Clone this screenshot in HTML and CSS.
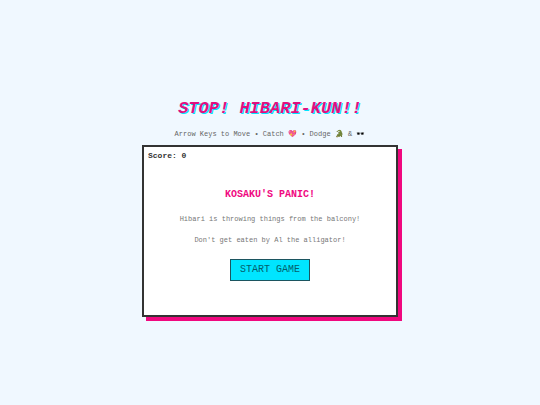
FILE: index.html
```html
<!DOCTYPE html>
<html lang="en">
<head>
<meta charset="UTF-8">
<meta name="viewport" content="width=device-width, initial-scale=1.0">
<title>Stop! Hibari-kun!!</title>
<link rel="stylesheet" href="styles.css">
</head>
<body>

<h1>STOP! HIBARI-KUN!!</h1>
<p class="controls">Arrow Keys to Move • Catch 💖 • Dodge 🐊 &amp; 🕶️</p>

<div class="game">
  <div class="score">Score: <span id="score">0</span></div>
  <div class="overlay">
    <h2>KOSAKU'S PANIC!</h2>
    <p>Hibari is throwing things from the balcony!</p>
    <p>Don't get eaten by Al the alligator!</p>
    <button type="button" class="start">START GAME</button>
  </div>
</div>

</body>
</html>
```
FILE: styles.css
```css
* { box-sizing: border-box; }
body {
  margin: 0;
  min-height: 100vh;
  display: flex; flex-direction: column;
  justify-content: center; align-items: center;
  background: #f0f8ff;
  color: #333;
  font-family: "Liberation Mono", "Courier New", monospace;
  font-size: 7px; line-height: 8px;
}
h1, h2, p { margin: 0; }
h1 {
  margin-top: 10px;
  font-size: 17px; line-height: 20px;
  font-style: italic;
  color: #e0107f;
  text-shadow: 1px 1px 0 #00e5ff;
}
.controls { margin: 11px 0 7px; color: #666; }

/* game window */
.game {
  width: 256px; max-width: 100%;
  min-height: 172px;
  display: flex; flex-direction: column;
  background: #fff;
  border: 2px solid #333;
  box-shadow: 4px 4px 0 #f0087f;
}
.score {
  padding: 4px;
  font-size: 8px; line-height: 9px; font-weight: bold;
}
.overlay {
  flex: 1;
  display: flex; flex-direction: column;
  align-items: center;
  padding-top: 25px;
  color: #777;
}
.overlay h2 {
  margin-bottom: 14px;
  font-size: 10px; line-height: 12px;
  color: #f0087f;
}
.overlay p { margin-bottom: 13px; }
.start {
  margin-top: 2px;
  padding: 4px 9px;
  background: #00e5ff; color: #045f6c;
  border: 1px solid #1c5560;
  border-radius: 0;
  font-family: inherit;
  font-size: 10px; line-height: 12px;
  cursor: pointer;
}
```
